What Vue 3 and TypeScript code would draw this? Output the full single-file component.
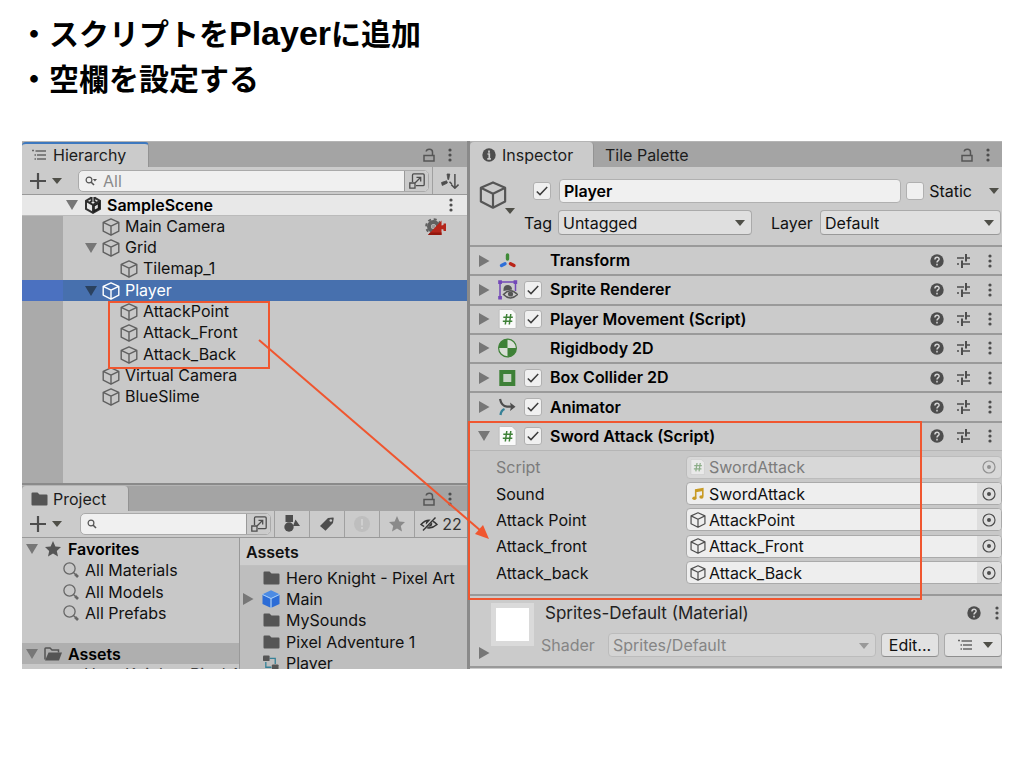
<script setup lang="ts">
import { ref } from 'vue'

interface TreeRow { name: string; depth: number; open?: boolean; selected?: boolean; camera?: boolean }
interface Component { name: string; icon: string; toggle: boolean; open?: boolean }
interface Field { label: string; value: string; icon: string; disabled?: boolean }

const tree: TreeRow[] = [
  { name: 'Main Camera', depth: 1, camera: true },
  { name: 'Grid', depth: 1, open: true },
  { name: 'Tilemap_1', depth: 2 },
  { name: 'Player', depth: 1, open: true, selected: true },
  { name: 'AttackPoint', depth: 2 },
  { name: 'Attack_Front', depth: 2 },
  { name: 'Attack_Back', depth: 2 },
  { name: 'Virtual Camera', depth: 1 },
  { name: 'BlueSlime', depth: 1 },
]
const favorites = ['All Materials', 'All Models', 'All Prefabs']
const assets = [
  { name: 'Hero Knight - Pixel Art', icon: 'folder' },
  { name: 'Main', icon: 'prefab' },
  { name: 'MySounds', icon: 'folder' },
  { name: 'Pixel Adventure 1', icon: 'folder' },
  { name: 'Player', icon: 'controller' },
]
const components: Component[] = [
  { name: 'Transform', icon: 'transform', toggle: false },
  { name: 'Sprite Renderer', icon: 'sprite', toggle: true },
  { name: 'Player Movement (Script)', icon: 'script', toggle: true },
  { name: 'Rigidbody 2D', icon: 'rigidbody', toggle: false },
  { name: 'Box Collider 2D', icon: 'collider', toggle: true },
  { name: 'Animator', icon: 'animator', toggle: true },
  { name: 'Sword Attack (Script)', icon: 'script', toggle: true, open: true },
]
const fields: Field[] = [
  { label: 'Script', value: 'SwordAttack', icon: 'script', disabled: true },
  { label: 'Sound', value: 'SwordAttack', icon: 'note' },
  { label: 'Attack Point', value: 'AttackPoint', icon: 'cube' },
  { label: 'Attack_front', value: 'Attack_Front', icon: 'cube' },
  { label: 'Attack_back', value: 'Attack_Back', icon: 'cube' },
]
const objectName = ref('Player')
</script>

<template>
  <svg class="defs" aria-hidden="true">
    <symbol id="cube" viewBox="0 0 18 18"><path d="M9 .9 16.8 4.400V13.200L9 17.200 1.200 13.200V4.400ZM1.200 4.400 9 8.200 16.800 4.400M9 8.200V17.200" fill="none" stroke="currentColor" stroke-width="1.400" stroke-linejoin="round" /></symbol>
    <symbol id="down" viewBox="0 0 12 12"><path d="M0 1H12L6 11Z" fill="currentColor" /></symbol>
    <symbol id="right" viewBox="0 0 12 12"><path d="M1 0V12L11.5 6Z" fill="currentColor" /></symbol>
    <symbol id="caret" viewBox="0 0 10 6"><path d="M0 0H10L5 6Z" fill="currentColor" /></symbol>
    <symbol id="dots" viewBox="0 0 4 14"><circle cx="2" cy="2" r="1.6" fill="currentColor" /><circle cx="2" cy="7" r="1.6" fill="currentColor" /><circle cx="2" cy="12" r="1.6" fill="currentColor" /></symbol>
    <symbol id="lock" viewBox="0 0 12 14"><path d="M1 7.5H11V13H1ZM9.5 7.500V4C9.500 .4 3.500 .4 3.200 3.500" fill="none" stroke="currentColor" stroke-width="1.5" /></symbol>
    <symbol id="list" viewBox="0 0 14 12"><path d="M3.500 2H14M5 6H14M5 10H14" stroke="currentColor" stroke-width="1.300" /><path d="M0 1.500H2M2.500 6H4M2.500 10H4" stroke="currentColor" stroke-width="1.500" /></symbol>
    <symbol id="plus" viewBox="0 0 16 16"><path d="M8 0V16M0 8H16" stroke="currentColor" stroke-width="2.200" /></symbol>
    <symbol id="find" viewBox="0 0 12 10"><circle cx="4" cy="4" r="2.900" fill="none" stroke="currentColor" stroke-width="1.200" /><path d="M6 6 9 9" stroke="currentColor" stroke-width="1.600" /></symbol>
    <symbol id="findmenu" viewBox="0 0 12 10"><circle cx="4" cy="4" r="2.900" fill="none" stroke="currentColor" stroke-width="1.200" /><path d="M6 6 9 9" stroke="currentColor" stroke-width="1.600" /><path d="M7.800 3H12L9.900 5.400Z" fill="currentColor" /></symbol>
    <symbol id="expand" viewBox="0 0 16 16"><path d="M3.500 9V2C3.500 1.200 4 .8 4.800 .8H14C14.800 .8 15.200 1.200 15.200 2V11.500C15.200 12.300 14.800 12.700 14 12.700H7M.8 10H6V15.200H.8ZM6 10 11.500 4.500M7.500 4.300H11.700V8.500" fill="none" stroke="currentColor" stroke-width="1.300" /></symbol>
    <symbol id="sort" viewBox="0 0 18 16"><path d="M6 1 8.800 1 7.700 6.500H6.900ZM.5 9.500 5.600 7.800 6.400 10 1.300 12.500Z" fill="currentColor" stroke="currentColor" stroke-width=".8" stroke-linejoin="round" /><path d="M8.500 8.700 10.800 11M13.900 1V15M10.300 11.600 13.900 15.200 17.500 11.600" fill="none" stroke="currentColor" stroke-width="1.500" /></symbol>
    <symbol id="unity" viewBox="0 0 18 18"><path d="M7.500 1.600 2 4.900V12.800L9 16.800 16 12.800V4.900L10.500 1.600" fill="none" stroke="#333" stroke-width="2" /><path d="M2 4.900 9 8.800 16 4.900M9 8.800V16.800M7.600 1V5.300L5.300 6.700M10.400 1V5.300L12.700 6.700" fill="none" stroke="#2c2c2c" stroke-width="1.900" /><path d="M9.500 9.300 16 5.700V12.800L9.500 16.500Z" fill="#1c1c1c" /><path d="M10.800 10.200 13.800 8.500V11.900L10.800 13.600Z" fill="#ddd" /></symbol>
    <symbol id="camera" viewBox="0 0 22 18"><circle cx="8.500" cy="8.500" r="4.500" fill="none" stroke="#606060" stroke-width="4" /><circle cx="8.500" cy="8.500" r="7.300" fill="none" stroke="#606060" stroke-width="2" stroke-dasharray="3 2.730" /><circle cx="8.500" cy="8.500" r="2" fill="#999" /><path d="M3 17 16.500 2.500V7.500L18.500 7V5.500H21V13H18.500V11.500L16.500 11V17Z" fill="#b5261b" /><path d="M3 17 5 14.500H16.500V17Z" fill="#94170e" /></symbol>
    <symbol id="folder" viewBox="0 0 17 14"><path d="M.5 1.500Q.5 .5 1.500 .5H6.500L8.500 2.500H15.500Q16.500 2.500 16.500 3.500V12.500Q16.500 13.500 15.500 13.500H1.500Q.5 13.500 .5 12.500Z" fill="#555" /></symbol>
    <symbol id="folderopen" viewBox="0 0 18 14"><path d="M1 12.500V1.800Q1 1 1.800 1H6L8 3H14.500V5.500" fill="none" stroke="#555" stroke-width="1.500" /><path d="M4.500 5.500H18L15 13.500H1Z" fill="#555" /></symbol>
    <symbol id="star" viewBox="0 0 16 16"><path d="M8 0 10.400 5.500 16 6 11.800 9.900 13 15.500 8 12.500 3 15.500 4.200 9.900 0 6 5.600 5.500Z" fill="currentColor" /></symbol>
    <symbol id="glass" viewBox="0 0 16 16"><circle cx="6.500" cy="6.500" r="5.600" fill="none" stroke="#666" stroke-width="1.300" /><path d="M10.700 10.700 12 12" stroke="#666" stroke-width="1.300" /><path d="M12 12 15 15" stroke="#666" stroke-width="2.600" /></symbol>
    <symbol id="prefab" viewBox="0 0 18 18"><path d="M9 .2 17.500 4.200 9 8.300 .5 4.200Z" fill="#4c8be4" /><path d="M.5 4.700 8.700 8.700V17.800L.5 14ZM17.500 4.700 9.300 8.700V17.800L17.500 14Z" fill="#2c6cd6" /><path d="M.5 4.500 9 8.500 17.500 4.500M9 8.500V18" fill="none" stroke="#9ccbff" stroke-width="1" /></symbol>
    <symbol id="controller" viewBox="0 0 17 16"><path d="M7 3H13V9M3 7V12.500H9" fill="none" stroke="#368197" stroke-width="1.400" /><rect x="0" y="0" width="7" height="6" rx="1" fill="#555" /><rect x="9.500" y="9.500" width="7" height="6" rx="1" fill="#555" /></symbol>
    <symbol id="shapes" viewBox="0 0 16 18"><path d="M1.500 0H9V7H1.500ZM11.500 4.500 16 11H9Z" fill="currentColor" /><circle cx="5" cy="12" r="4.700" fill="currentColor" /></symbol>
    <symbol id="tag" viewBox="0 0 14 14"><path d="M0 9 8 1 13 .5Q14 .5 13.700 1.500L13 6 5.500 13.700Z" fill="currentColor" /><circle cx="10.800" cy="3.500" r="1.300" fill="#cbcbcb" /></symbol>
    <symbol id="warn" viewBox="0 0 16 16"><circle cx="8" cy="8" r="8" fill="#bebebe" /><path d="M8 3V9.500M8 11V13" stroke="#cfcfcf" stroke-width="2" /></symbol>
    <symbol id="eye" viewBox="0 0 18 16"><path d="M1 8.500Q9 0 17 8.500Q9 15.500 1 8.500Z" fill="none" stroke="currentColor" stroke-width="1.500" /><circle cx="9" cy="7.500" r="3.200" fill="currentColor" /><path d="M2 15 15 1" stroke="#cbcbcb" stroke-width="3" /><path d="M3 14.500 15.500 1.500" stroke="currentColor" stroke-width="1.400" /></symbol>
    <symbol id="info" viewBox="0 0 14 14"><circle cx="7" cy="7" r="6.700" fill="#4d4d4d" /><path d="M7 2.500V4.700M5.500 6H7.300V10.500M5.300 10.800H8.900" fill="none" stroke="#cbcbcb" stroke-width="1.700" /></symbol>
    <symbol id="help" viewBox="0 0 14 14"><circle cx="7" cy="7" r="6.700" fill="#4d4d4d" /><path d="M4.900 5.400C5 2.300 9.300 2.600 9.100 5.200C9 6.600 7 6.700 7 8.500M7 9.700V11.400" fill="none" stroke="#d5d5d5" stroke-width="1.500" /></symbol>
    <symbol id="preset" viewBox="0 0 14 14"><path d="M0 4H7M10 4H13M0 10H2M6 10H13" stroke="currentColor" stroke-width="1.400" /><path d="M9 0V7.500M5 6.500V14" stroke="currentColor" stroke-width="2" /></symbol>
    <symbol id="target" viewBox="0 0 14 14"><circle cx="7" cy="7" r="6" fill="none" stroke="currentColor" stroke-width="1.200" /><circle cx="7" cy="7" r="2" fill="currentColor" /></symbol>
    <symbol id="tick" viewBox="0 0 12 10"><path d="M.8 5.500 4 8.600 11.200 1" fill="none" stroke="#3c3c3c" stroke-width="1.500" /></symbol>
    <symbol id="transform" viewBox="0 0 20 20"><path d="M9.500 4V8" stroke="#3f8a37" stroke-width="3.400" stroke-linecap="round" /><path d="M3.500 14.500 7 12.700" stroke="#2f6fd8" stroke-width="3.400" stroke-linecap="round" /><path d="M12.500 12.700 16 14.500" stroke="#ba2418" stroke-width="3.400" stroke-linecap="round" /></symbol>
    <symbol id="sprite" viewBox="0 0 20 20"><path d="M2 2V18M2 2H17.500V11" fill="none" stroke="#7348b8" stroke-width="1.500" /><path d="M.2 .2H3.900V3.900H.2ZM15.600 .2H19.200V3.900H15.600ZM.2 15.900H3.900V19.500H.2Z" fill="#7348b8" /><path d="M5.500 11Q5 5 10 5Q14 5.500 14 9.500Z" fill="#555" /><path d="M5.500 14.500Q12.500 7 19.500 14.500Q12.500 21.500 5.500 14.500Z" fill="#cbcbcb" stroke="#555" stroke-width="1.500" /><circle cx="12.500" cy="14" r="2.600" fill="#555" /></symbol>
    <symbol id="script" viewBox="0 0 20 20"><path d="M2.500 .5H14L18 4.500V18.500Q18 19.500 17 19.500H2.500Q1.200 19.500 1.200 18.500V1.500Q1.200 .5 2.500 .5Z" fill="#fafafa" stroke="#b5b5b5" stroke-width=".7" /><path d="M8.800 5 7.300 15.500M12.800 5 11.300 15.500M5.300 8.300H14.800M4.800 12.300H14.300" stroke="#3e8137" stroke-width="1.500" /></symbol>
    <symbol id="rigidbody" viewBox="0 0 20 20"><circle cx="9.500" cy="10" r="8.900" fill="#d9dfd7" stroke="#3e8137" stroke-width="1.200" /><path d="M9.500 10V1.100A8.900 8.900 0 0 0 .6 10ZM9.500 10V18.900A8.900 8.900 0 0 0 18.400 10Z" fill="#3e8137" /></symbol>
    <symbol id="collider" viewBox="0 0 20 20"><path d="M3.300 4H15.300V16H3.300Z" fill="#c8d3c6" stroke="#3e8137" stroke-width="4" /></symbol>
    <symbol id="animator" viewBox="0 0 20 20"><path d="M2 2Q3.500 9 9 9.700H13" fill="none" stroke="#4d4d4d" stroke-width="2.200" /><path d="M12 5.500 17.500 9.700 12 14 13 9.700Z" fill="#4d4d4d" /><path d="M2.500 18Q3 13.500 6.500 12" fill="none" stroke="#368197" stroke-width="2.300" /></symbol>
    <symbol id="note" viewBox="0 0 16 16"><path d="M5.700 12V4L12.800 2.700V10.500M5.700 5.500 12.800 4.200" fill="none" stroke="#c89b25" stroke-width="1.600" /><ellipse cx="4.400" cy="12.300" rx="2.100" ry="1.700" fill="#c89b25" /><ellipse cx="11.400" cy="11" rx="2.100" ry="1.700" fill="#c89b25" /></symbol>
  </svg>

  <main class="slide">
    <ul class="notes">
      <li>・スクリプトを<span class="latin">Player</span>に追加</li>
      <li>・空欄を設定する</li>
    </ul>

    <div class="editor">
      <div class="left">
        <section class="panel hierarchy">
          <header class="tabs">
            <button class="tab focus"><svg class="i-list"><use href="#list" /></svg>Hierarchy</button>
            <span class="grow"></span>
            <button class="plain" aria-label="Lock hierarchy"><svg class="i-lock"><use href="#lock" /></svg></button>
            <button class="plain" aria-label="Hierarchy menu"><svg class="i-dots"><use href="#dots" /></svg></button>
          </header>
          <div class="toolbar">
            <button class="plain add" aria-label="Create object"><svg class="i-plus"><use href="#plus" /></svg><svg class="i-caret"><use href="#caret" /></svg></button>
            <div class="search">
              <svg class="i-find"><use href="#findmenu" /></svg>
              <input type="search" placeholder="All" aria-label="Search hierarchy" />
              <button class="plain expand" aria-label="Open search"><svg class="i-expand"><use href="#expand" /></svg></button>
            </div>
            <button class="plain cell sort" aria-label="Sorting"><svg class="i-sort"><use href="#sort" /></svg></button>
          </div>
          <div class="scene">
            <svg class="i-tri"><use href="#down" /></svg>
            <svg class="i-18"><use href="#unity" /></svg>
            <b>SampleScene</b>
            <span class="grow"></span>
            <button class="plain" aria-label="Scene menu"><svg class="i-dots"><use href="#dots" /></svg></button>
          </div>
          <div class="tree-area">
            <ul class="tree">
              <li v-for="row in tree" :key="row.name" :class="['tree-row', 'depth-' + row.depth, { selected: row.selected }]">
                <span class="gutter"></span>
                <span class="slot"><svg v-if="row.open" class="i-tri"><use href="#down" /></svg></span>
                <svg class="i-18"><use href="#cube" /></svg>
                <span class="label">{{ row.name }}</span>
                <svg v-if="row.camera" class="i-camera"><use href="#camera" /></svg>
              </li>
            </ul>
          </div>
        </section>

        <section class="panel project">
          <header class="tabs">
            <button class="tab tab-project"><svg class="i-folder"><use href="#folder" /></svg>Project</button>
            <span class="grow"></span>
            <button class="plain" aria-label="Lock project"><svg class="i-lock"><use href="#lock" /></svg></button>
            <button class="plain" aria-label="Project menu"><svg class="i-dots"><use href="#dots" /></svg></button>
          </header>
          <div class="toolbar">
            <button class="plain add" aria-label="Create asset"><svg class="i-plus"><use href="#plus" /></svg><svg class="i-caret"><use href="#caret" /></svg></button>
            <div class="search">
              <svg class="i-find"><use href="#find" /></svg>
              <input type="search" aria-label="Search project" />
              <button class="plain expand" aria-label="Open search"><svg class="i-expand"><use href="#expand" /></svg></button>
            </div>
            <button class="plain cell" aria-label="Filter by type"><svg class="i-18"><use href="#shapes" /></svg></button>
            <button class="plain cell" aria-label="Filter by label"><svg class="i-14"><use href="#tag" /></svg></button>
            <button class="plain cell" aria-label="Filter by import log"><svg class="i-16"><use href="#warn" /></svg></button>
            <button class="plain cell faint" aria-label="Save search"><svg class="i-16"><use href="#star" /></svg></button>
            <button class="plain cell hidden-count"><svg class="i-18"><use href="#eye" /></svg>22</button>
          </div>
          <div class="browser">
            <div class="folders">
              <ul class="favorites">
                <li class="root"><svg class="i-tri"><use href="#down" /></svg><svg class="i-16 dark"><use href="#star" /></svg><b>Favorites</b></li>
                <li v-for="f in favorites" :key="f" class="fav"><svg class="i-16"><use href="#glass" /></svg>{{ f }}</li>
              </ul>
              <div class="root asset-root"><svg class="i-tri"><use href="#down" /></svg><svg class="i-open"><use href="#folderopen" /></svg><b>Assets</b></div>
              <div class="cut-row">Hero Knight - Pixel Art</div>
            </div>
            <div class="contents">
              <div class="crumb">Assets</div>
              <ul class="assets">
                <li v-for="a in assets" :key="a.name">
                  <span class="slot"><svg v-if="a.icon === 'prefab'" class="i-right"><use href="#right" /></svg></span>
                  <span class="asset-icon"><svg :class="a.icon === 'prefab' ? 'i-18' : a.icon === 'folder' ? 'i-folder' : 'i-16'"><use :href="'#' + a.icon" /></svg></span>
                  {{ a.name }}
                </li>
              </ul>
            </div>
          </div>
        </section>
      </div>

      <section class="panel inspector">
        <header class="tabs">
          <button class="tab tab-inspector"><svg class="i-14"><use href="#info" /></svg>Inspector</button>
          <button class="tab idle">Tile Palette</button>
          <span class="grow"></span>
          <button class="plain" aria-label="Lock inspector"><svg class="i-lock"><use href="#lock" /></svg></button>
          <button class="plain" aria-label="Inspector menu"><svg class="i-dots"><use href="#dots" /></svg></button>
        </header>

        <div class="object">
          <button class="plain object-icon" aria-label="Object icon"><svg class="i-big"><use href="#cube" /></svg><svg class="i-caret"><use href="#caret" /></svg></button>
          <div class="object-form">
            <div class="line name-line">
              <label class="check"><input type="checkbox" checked aria-label="Active" /><svg><use href="#tick" /></svg></label>
              <input v-model="objectName" class="name" type="text" aria-label="Name" />
              <label class="static"><span class="check"><input type="checkbox" /><svg><use href="#tick" /></svg></span>Static</label>
              <button class="plain" aria-label="Static options"><svg class="i-caret"><use href="#caret" /></svg></button>
            </div>
            <div class="line">
              <label class="tag-label" for="tag-select">Tag</label>
              <span class="select tag-select"><select id="tag-select"><option>Untagged</option></select><svg class="i-caret"><use href="#caret" /></svg></span>
              <label class="layer-label" for="layer-select">Layer</label>
              <span class="select layer-select"><select id="layer-select"><option>Default</option></select><svg class="i-caret"><use href="#caret" /></svg></span>
            </div>
          </div>
        </div>

        <ul class="components">
          <li v-for="c in components" :key="c.name" class="component">
            <button class="plain fold" :aria-label="'Toggle ' + c.name"><svg class="i-right"><use :href="c.open ? '#down' : '#right'" /></svg></button>
            <svg class="i-20"><use :href="'#' + c.icon" /></svg>
            <span><label v-if="c.toggle" class="check"><input type="checkbox" checked :aria-label="c.name + ' enabled'" /><svg><use href="#tick" /></svg></label></span>
            <b>{{ c.name }}</b>
            <button class="plain" aria-label="Help"><svg class="i-14"><use href="#help" /></svg></button>
            <button class="plain" aria-label="Presets"><svg class="i-14"><use href="#preset" /></svg></button>
            <button class="plain" aria-label="Component menu"><svg class="i-dots"><use href="#dots" /></svg></button>
          </li>
        </ul>

        <div class="fields">
          <div v-for="f in fields" :key="f.label" :class="['field', { disabled: f.disabled }]">
            <span>{{ f.label }}</span>
            <div class="object-field">
              <svg class="i-16"><use :href="'#' + f.icon" /></svg>
              <span class="grow">{{ f.value }}</span>
              <button class="plain picker" :disabled="f.disabled" :aria-label="'Select ' + f.label"><svg class="i-14"><use href="#target" /></svg></button>
            </div>
          </div>
        </div>

        <div class="material">
          <div class="preview-col">
            <div class="preview"><span></span></div>
            <button class="plain" aria-label="Toggle material"><svg class="i-right"><use href="#right" /></svg></button>
          </div>
          <div class="material-body">
            <div class="material-title">
              <span class="grow">Sprites-Default (Material)</span>
              <button class="plain" aria-label="Material help"><svg class="i-14"><use href="#help" /></svg></button>
              <button class="plain" aria-label="Material menu"><svg class="i-dots"><use href="#dots" /></svg></button>
            </div>
            <div class="shader">
              <label for="shader-select">Shader</label>
              <span class="select off"><select id="shader-select" disabled><option>Sprites/Default</option></select><svg class="i-caret"><use href="#caret" /></svg></span>
              <button class="boxed">Edit...</button>
              <button class="boxed list-button" aria-label="Shader list"><svg class="i-list"><use href="#list" /></svg><svg class="i-caret"><use href="#caret" /></svg></button>
            </div>
          </div>
        </div>
      </section>

      <svg class="marks" viewBox="0 0 980 528" preserveAspectRatio="none" aria-hidden="true">
        <g fill="none" stroke="#f0562f" stroke-width="2">
          <rect x="87" y="161" width="160" height="66" />
          <rect x="447" y="281" width="452" height="177" />
          <path d="M237 199 459 390" />
        </g>
        <path d="M467 398 453 393 461 384Z" fill="#f0562f" />
      </svg>
    </div>
  </main>
</template>

<style>
body { margin: 0; background: #fff; }
</style>

<style scoped>
* { box-sizing: border-box; }
.defs { position: absolute; width: 0; height: 0; }
ul { list-style: none; margin: 0; padding: 0; }
svg { display: block; flex: none; }
b { font-weight: 600; }
button, input, select { font: inherit; color: inherit; }
.slide { padding: 10px 22px 99px; }
.notes { height: 131px; margin-left: -3px; font: bold 30px/45px "Noto Sans CJK JP", sans-serif; color: #000; }
.notes li { height: 45px; white-space: nowrap; }
.latin { font-family: "Liberation Sans", sans-serif; font-size: 34px; line-height: 40px; }

.editor { position: relative; display: grid; grid-template-columns: minmax(0, 445fr) minmax(0, 532fr); gap: 3px; height: 528px; overflow: hidden; background: #8a8a8a; color: #111; font: 16px/20px Inter, sans-serif; white-space: nowrap; }
.left { display: flex; flex-direction: column; gap: 2px; min-height: 0; }
.panel { background: #c8c8c8; overflow: hidden; }
.hierarchy { height: 342px; display: flex; flex-direction: column; }
.project { flex: 1; min-height: 0; display: flex; flex-direction: column; }
.grow { flex: 1; min-width: 0; }

.tabs { display: flex; align-items: center; flex: none; height: 26px; padding-right: 13px; background: #a4a4a4; border-top: 1px solid #b4b4b4; gap: 11px; color: #555; }
.tab { display: flex; align-items: center; align-self: stretch; gap: 7px; padding: 1px 0 0 10px; width: 127px; border: 0; border-right: 1px solid #939393; border-radius: 4px 4px 0 0; background: #cbcbcb; color: #1c1c1c; }
.focus { border-top: 2px solid #3d78bf; padding: 0 0 1px 10px; }
.tab-project { width: 107px; padding: 0 0 0 9px; gap: 5px; }
.tab-inspector { width: 124px; padding-left: 12px; gap: 6px; }
.idle { width: auto; margin-left: -11px; padding-left: 11px; border: 0; background: none; }
.inspector .tabs { padding-right: 10px; }
.plain { display: flex; align-items: center; justify-content: center; padding: 0; border: 0; background: none; color: #4d4d4d; }

.toolbar { display: flex; flex: none; height: 28px; background: #cbcbcb; border-bottom: 1px solid #999; }
.project .toolbar { height: 27px; }
.add { width: 56px; padding-left: 8px; gap: 6px; justify-content: flex-start; }
.search { display: flex; align-items: center; flex: 1; min-width: 0; height: 22px; margin: 3px 3px 0 0; border: 1px solid #aaa; border-radius: 5px; background: #f0f0f0; color: #555; overflow: hidden; }
.project .search { margin: 2px 3px 0 2px; }
.search input { flex: 1; min-width: 0; width: 0; height: 20px; padding: 0 0 0 6px; border: 0; outline: 0; background: none; appearance: none; }
.search input::placeholder { color: #8a8a8a; opacity: 1; }
.expand { width: 24px; align-self: stretch; border-left: 1px solid #999; background: #cbcbcb; }
.cell { width: 35px; border-left: 1px solid #a0a0a0; }
.hidden-count { width: 53px; gap: 4px; color: #333; }
.faint { color: #8a8a8a; }

.scene { display: flex; align-items: center; flex: none; height: 21px; padding: 0 12px 0 44px; background: #e8e8e8; border-bottom: 1px solid #bbb; color: #000; }
.scene .i-18 { margin: 0 5px 0 6px; }
.tree-area { flex: 1; background: linear-gradient(90deg, #aaa 41px, #c8c8c8 41px); }
.tree { display: grid; grid-auto-rows: 1fr; height: 192px; }
.tree-row { display: flex; align-items: center; color: #111; }
.gutter { align-self: stretch; flex: none; width: 41px; }
.slot { display: flex; flex: none; width: 17px; }
.depth-1 .slot { margin-left: 22px; }
.depth-2 .slot { margin-left: 40px; }
.tree-row .i-18 { margin-right: 5px; color: #606060; }
.label { flex: 1; line-height: 18px; padding-bottom: 2px; }
.selected { background: #4770ae; color: #fff; }
.selected .gutter { background: #4b71c0; }
.tree-row.selected .i-18 { color: #fff; }
.selected .i-tri { color: #2a415f; }
.i-camera { width: 22px; height: 18px; margin-right: 20px; }

.browser { display: grid; grid-template-columns: minmax(0, 217fr) 1px minmax(0, 227fr); flex: 1; min-height: 0; }
.folders { border-right: 1px solid #999; grid-column: 1 / 3; overflow: hidden; }
.favorites { display: grid; grid-auto-rows: 1fr; height: 86px; margin-bottom: 19px; }
.root { display: flex; align-items: center; padding-left: 4px; color: #000; }
.root .i-16 { margin: 0 7px; }
.dark { color: #555; }
.fav { display: flex; align-items: center; gap: 6px; padding-left: 41px; }
.asset-root { height: 21px; background: #afafaf; }
.i-open { width: 18px; height: 14px; margin: 0 6px 0 6px; }
.cut-row { padding-left: 62px; line-height: 16px; margin-top: 2px; color: #444; }
.contents { background: #bebebe; overflow: hidden; }
.crumb { height: 28px; padding: 4px 0 0 6px; background: #cecece; border-bottom: 1px solid #c0c0c0; font-weight: 600; color: #111; }
.assets { display: grid; grid-auto-rows: 1fr; height: 107px; margin-top: 1px; }
.assets li { display: flex; align-items: center; }
.contents .slot { width: 21px; padding-left: 2px; }
.asset-icon { display: flex; flex: none; justify-content: center; width: 20px; margin-right: 5px; }

.inspector { background: #cbcbcb; display: flex; flex-direction: column; }
.object { display: flex; flex: none; height: 78px; }
.object-icon { position: relative; flex: none; width: 54px; padding: 14px 0 0 9px; align-items: flex-start; justify-content: flex-start; }
.object-icon .i-caret { position: absolute; left: 35px; top: 41px; }
.object-form { flex: 1; min-width: 0; padding: 11px 1px 0 0; display: flex; flex-direction: column; gap: 7px; }
.line { display: flex; align-items: center; height: 25px; }
.name-line { padding: 0 2px 0 9px; }
.check { position: relative; display: block; flex: none; width: 18px; height: 18px; }
.check input { display: block; width: 18px; height: 18px; margin: 0; appearance: none; background: #f0f0f0; border: 1px solid #b0b0b0; border-radius: 3px; }
.check svg { position: absolute; left: 3px; top: 4px; width: 12px; height: 10px; visibility: hidden; pointer-events: none; }
.check input:checked + svg { visibility: visible; }
.name { flex: 1; min-width: 0; height: 24px; margin: 0 5px 0 8px; padding: 0 4px; border: 1px solid #b0b0b0; border-radius: 4px; background: #f0f0f0; font-weight: 600; color: #000; }
.static { display: flex; align-items: center; gap: 5px; margin-right: 17px; }
.tag-label { flex: none; width: 34px; }
.layer-label { flex: none; width: 49px; margin-left: 19px; }
.select { position: relative; display: block; min-width: 0; height: 25px; }
.select select { display: block; width: 100%; height: 100%; padding: 0 4px; border: 1px solid #aaa; border-bottom-color: #999; border-radius: 4px; background: #dfdfdf; appearance: none; }
.select .i-caret { position: absolute; right: 7px; top: 10px; pointer-events: none; }
.tag-select { flex: 194 1 0; }
.layer-select { flex: 181 1 0; }

.components { display: grid; grid-auto-rows: 1fr; flex: none; height: 205px; }
.component { display: grid; grid-template-columns: 28px 26px 26px minmax(0, 1fr) 27px 27px 25px; align-items: center; border-top: 2px solid #9a9a9a; color: #000; }
.component b { padding-bottom: 1px; }
.fold { color: #777; }
.fields { display: grid; grid-auto-rows: 1fr; flex: none; height: 144px; padding: 3px 0 8px; background: #c8c8c8; border-top: 1px solid #b5b5b5; }
.field { display: grid; grid-template-columns: minmax(0, 190fr) minmax(0, 316fr); align-items: center; padding-left: 26px; }
.object-field { display: flex; align-items: center; gap: 3px; height: 23px; padding-left: 3px; border: 1px solid #aaa; border-radius: 4px; background: #eee; overflow: hidden; }
.object-field .i-16 { color: #505050; }
.picker { width: 24px; align-self: stretch; background: #dedede; }
.disabled { color: #7c7c7c; }
.disabled .object-field { background: #d8d8d8; border-color: #bcbcbc; }
.disabled .picker, .disabled .i-16 { opacity: .5; background: none; }

.material { display: flex; flex: none; height: 74px; border-top: 2px solid #999; border-bottom: 2px solid #999; }
.preview-col { flex: none; width: 71px; padding-top: 7px; }
.preview-col .plain { width: 28px; height: 14px; color: #777; }
.preview { display: flex; align-items: center; justify-content: center; width: 43px; height: 43px; margin-left: 21px; background: #dadada; }
.preview span { width: 33px; height: 33px; background: #fff; }
.material-body { flex: 1; min-width: 0; padding-top: 7px; }
.material-title { display: flex; align-items: center; gap: 12px; padding: 0 1px 0 4px; height: 20px; font-size: 17px; color: #222; }
.shader { display: flex; align-items: center; gap: 5px; margin-top: 10px; height: 24px; color: #858585; }
.shader label { flex: none; width: 62px; }
.shader .select { flex: 1; height: 24px; }
.off select { background: #d4d4d4; border-color: #bcbcbc; color: #858585; opacity: 1; }
.off .i-caret { color: #999; }
.boxed { display: flex; flex: none; align-items: center; justify-content: center; width: 58px; height: 24px; padding: 0; border: 1px solid #aaa; border-bottom-color: #8e8e8e; border-radius: 4px; background: #e2e2e2; color: #111; }
.list-button { gap: 11px; padding-left: 5px; color: #555; }

.i-list { width: 14px; height: 12px; color: #666; }
.i-lock { width: 12px; height: 14px; color: #555; }
.i-dots { width: 4px; height: 14px; margin: 0 2px; color: #4d4d4d; }
.i-plus { width: 16px; height: 16px; }
.i-caret { width: 10px; height: 6px; color: #4f4f48; }
.i-find { width: 12px; height: 10px; margin-left: 6px; }
.i-expand, .i-16 { width: 16px; height: 16px; }
.i-sort { width: 18px; height: 16px; }
.i-18 { width: 18px; height: 18px; }
.i-14 { width: 14px; height: 14px; }
.i-20 { width: 20px; height: 20px; }
.i-big { width: 28px; height: 28px; color: #555; }
.i-tri { width: 12px; height: 12px; color: #777; }
.i-right { width: 12px; height: 12px; color: #777; }
.i-folder { width: 17px; height: 14px; }
.marks { position: absolute; left: 0; top: 0; width: 100%; height: 100%; pointer-events: none; }
</style>
